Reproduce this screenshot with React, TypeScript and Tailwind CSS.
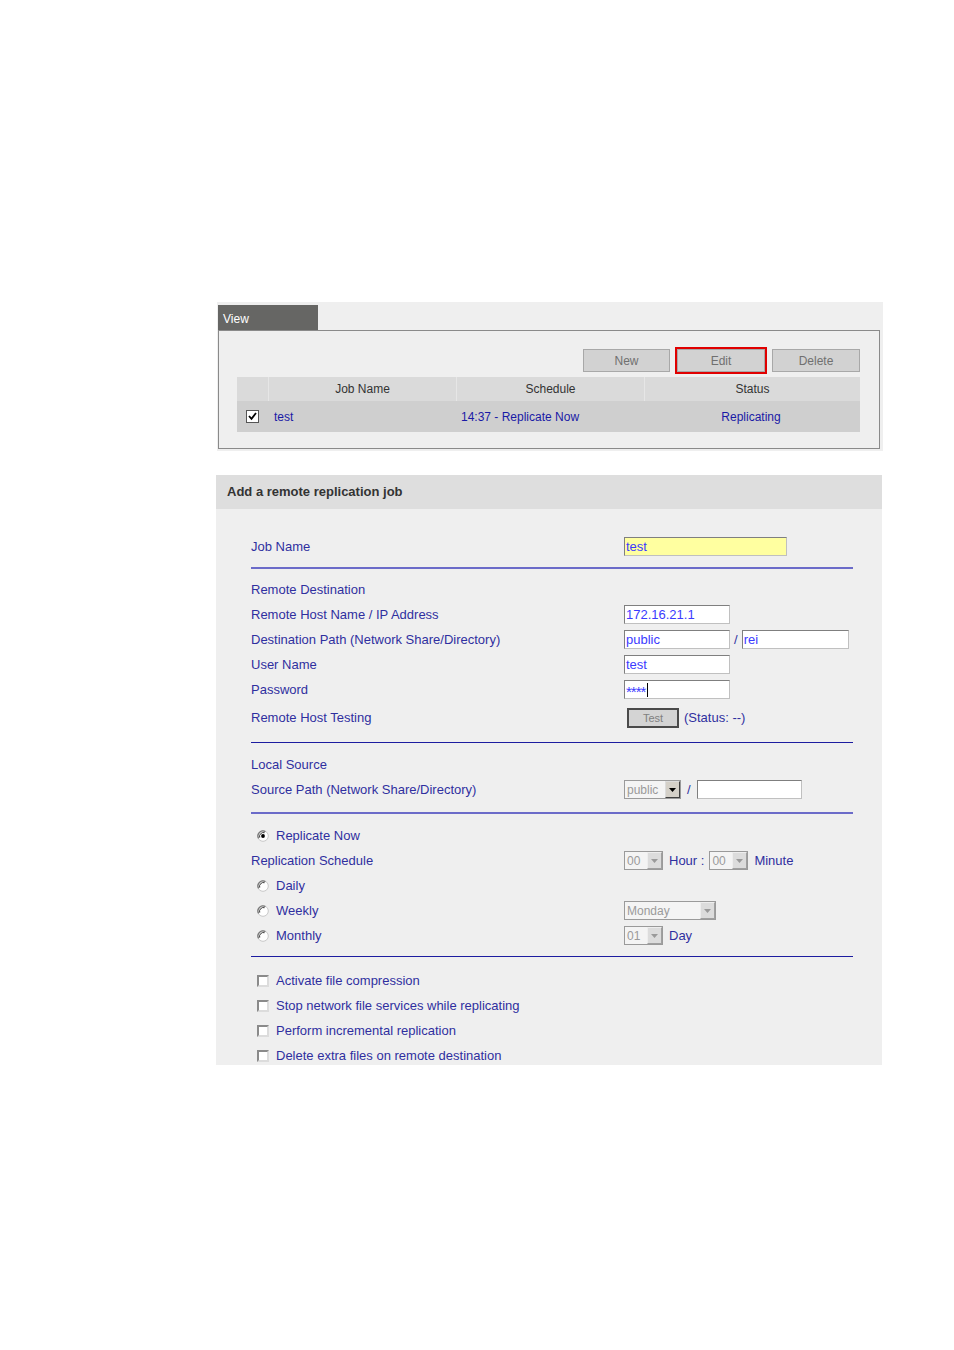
import React from "react";

const font = { fontFamily: '"Liberation Sans", Arial, sans-serif' };

function Radio({ checked = false }: { checked?: boolean }) {
  return (
    <svg width="12" height="12" viewBox="0 0 12 12" className="shrink-0">
      <circle cx="6" cy="6" r="5.3" fill="#ffffff" stroke="#c8c8c8" strokeWidth="1" />
      <path d="M1.6 8.4 A5 5 0 0 1 8.4 1.6" stroke="#7a7a7a" strokeWidth="1.3" fill="none" />
      <path d="M2.7 7.6 A3.9 3.9 0 0 1 7.6 2.7" stroke="#3a3a3a" strokeWidth="1" fill="none" />
      {checked && <circle cx="6" cy="6" r="1.9" fill="#000000" />}
    </svg>
  );
}

function Check() {
  return (
    <span className="block h-[12px] w-[12px] shrink-0 border-2 border-t-[#8a8a8a] border-l-[#8a8a8a] border-r-[#dcdcdc] border-b-[#dcdcdc] bg-white" />
  );
}

function TextBox({ value, w, yellow }: { value: string; w: string; yellow?: boolean }) {
  return (
    <div
      className={`flex h-[19px] items-center border border-[#7f7f7f] border-r-[#c0c0c0] border-b-[#c0c0c0] px-[1px] text-[13px] text-[#3b3bff] ${w} ${
        yellow ? "bg-[#ffffa0]" : "bg-white"
      }`}
    >
      {value}
    </div>
  );
}

function Select({ value, w, enabled }: { value: string; w: string; enabled?: boolean }) {
  return (
    <div className={`flex h-[19px] items-stretch border border-[#9a9a9a] bg-[#f4f4f4] ${w}`}>
      <span className="flex flex-1 items-center pl-[2px] text-[12px] text-[#9a9a9a]">{value}</span>
      <span
        className={`flex w-[15px] items-center justify-center border ${
          enabled
            ? "border-[#404040] border-t-[#dcdcdc] border-l-[#dcdcdc] bg-[#d4d0c8]"
            : "border-[#a0a0a0] border-t-[#eeeeee] border-l-[#eeeeee] bg-[#dcdcdc]"
        }`}
      >
        <svg width="7" height="4" viewBox="0 0 7 4">
          <path d="M0 0 H7 L3.5 4 Z" fill={enabled ? "#000" : "#9a9a9a"} />
        </svg>
      </span>
    </div>
  );
}

function Row({ children, className = "" }: { children: React.ReactNode; className?: string }) {
  return <div className={`flex h-[25px] items-center ${className}`}>{children}</div>;
}

function Label({ children }: { children: React.ReactNode }) {
  return <span className="w-[373px] shrink-0 text-[13px] text-[#2f2f9f]">{children}</span>;
}

function RadioLabel({ checked, text, w }: { checked?: boolean; text: string; w?: string }) {
  return (
    <>
      <span className="ml-[6px] mr-[7px] flex">
        <Radio checked={checked} />
      </span>
      <span className={`text-[13px] text-[#2f2f9f] ${w ?? ""}`}>{text}</span>
    </>
  );
}

export default function App() {
  return (
    <div className="min-h-[1350px] w-[954px] bg-white pt-[302px]" style={font}>
      {/* View panel */}
      <div className="ml-[217px] w-[666px] bg-[#efefef] pb-[2px] pl-[1px] pr-[3px] pt-[3px]">
        <div className="flex h-[25px] w-[100px] items-center bg-[#666664] pl-[5px] pt-[2px] text-[12px] text-white">
          View
        </div>
        <div className="h-[119px] border border-[#8a8a8a] pl-[18px] pr-[19px] pt-[18px]">
          <div className="flex justify-end gap-[7px]">
            <button className="h-[23px] w-[87px] border border-[#a8a8a8] bg-[#d2d2d2] text-[12px] text-[#707070]">
              New
            </button>
            <button className="h-[23px] w-[88px] border border-[#a8a8a8] bg-[#d2d2d2] text-[12px] text-[#707070] outline-2 outline-offset-[0px] outline-[#e00000]">
              Edit
            </button>
            <button className="h-[23px] w-[88px] border border-[#a8a8a8] bg-[#d2d2d2] text-[12px] text-[#707070]">
              Delete
            </button>
          </div>
          <div className="mt-[5px] text-[12px]">
            <div className="grid h-[24px] grid-cols-[31px_187px_187px_1fr] gap-x-[1px] bg-[#e6e6e6] text-[#333]">
              <div className="bg-[#dadada]" />
              <div className="flex items-center justify-center bg-[#dadada]">Job Name</div>
              <div className="flex items-center justify-center bg-[#dadada]">Schedule</div>
              <div className="flex items-center justify-center bg-[#dadada]">Status</div>
            </div>
            <div className="grid h-[31px] grid-cols-[31px_187px_187px_1fr] items-center bg-[#cfcfcf] text-[#1a1aa6]">
              <div className="flex justify-center">
                <span className="flex h-[13px] w-[13px] items-center justify-center border border-[#555] bg-white">
                  <svg width="9" height="9" viewBox="0 0 9 9">
                    <path d="M1 4 L3.5 6.8 L8 1" stroke="#000" strokeWidth="1.8" fill="none" />
                  </svg>
                </span>
              </div>
              <div className="pl-[6px]">test</div>
              <div className="pl-[6px]">14:37 - Replicate Now</div>
              <div className="text-center">Replicating</div>
            </div>
          </div>
        </div>
      </div>

      {/* Add job panel */}
      <div className="ml-[216px] mt-[24px] h-[590px] w-[666px] overflow-hidden bg-[#efefef]">
        <div className="flex h-[34px] items-center bg-[#dedede] pl-[11px] text-[13px] font-bold text-[#333]">
          Add a remote replication job
        </div>
        <div className="pl-[35px] pr-[29px] pt-[25px]">
          <Row>
            <Label>Job Name</Label>
            <TextBox value="test" w="w-[163px]" yellow />
          </Row>
          <div className="mt-[8px] h-[2px] bg-[#6b6bc9]" />

          <Row className="mt-[8px]">
            <Label>Remote Destination</Label>
          </Row>
          <Row>
            <Label>Remote Host Name / IP Address</Label>
            <TextBox value="172.16.21.1" w="w-[106px]" />
          </Row>
          <Row>
            <Label>Destination Path (Network Share/Directory)</Label>
            <TextBox value="public" w="w-[106px]" />
            <span className="mx-[4px] text-[13px] text-[#2f2f9f]">/</span>
            <TextBox value="rei" w="w-[107px]" />
          </Row>
          <Row>
            <Label>User Name</Label>
            <TextBox value="test" w="w-[106px]" />
          </Row>
          <Row>
            <Label>Password</Label>
            <div className="flex h-[19px] w-[106px] items-center border border-[#7f7f7f] border-r-[#c0c0c0] border-b-[#c0c0c0] bg-white px-[1px] text-[15px] leading-none text-[#3b3bff]">
              <span className="pt-[4px] tracking-[-1px]">****</span>
              <span className="ml-[2px] h-[14px] w-[1px] bg-black" />
            </div>
          </Row>
          <Row className="mt-[3px]">
            <Label>Remote Host Testing</Label>
            <button className="ml-[3px] h-[20px] w-[52px] border-2 border-[#4a4a4a] bg-[#d4d4d4] text-[11px] text-[#808080]">
              Test
            </button>
            <span className="ml-[5px] text-[13px] text-[#2f2f9f]">(Status: --)</span>
          </Row>
          <div className="mt-[12px] h-[1px] bg-[#1c1ca0]" />

          <Row className="mt-[9px]">
            <Label>Local Source</Label>
          </Row>
          <Row>
            <Label>Source Path (Network Share/Directory)</Label>
            <Select value="public" w="w-[57px]" enabled />
            <span className="mx-[6px] text-[13px] text-[#2f2f9f]">/</span>
            <TextBox value="" w="w-[105px]" />
          </Row>
          <div className="mt-[10px] h-[2px] bg-[#6b6bc9]" />

          <Row className="mt-[9px]">
            <RadioLabel checked text="Replicate Now" />
          </Row>
          <Row>
            <Label>Replication Schedule</Label>
            <Select value="00" w="w-[39px]" />
            <span className="ml-[6px] text-[13px] text-[#2f2f9f]">Hour :</span>
            <span className="ml-[5px]">
              <Select value="00" w="w-[39px]" />
            </span>
            <span className="ml-[6px] text-[13px] text-[#2f2f9f]">Minute</span>
          </Row>
          <Row>
            <RadioLabel text="Daily" />
          </Row>
          <Row>
            <RadioLabel text="Weekly" w="w-[348px]" />
            <Select value="Monday" w="w-[92px]" />
          </Row>
          <Row>
            <RadioLabel text="Monthly" w="w-[348px]" />
            <Select value="01" w="w-[39px]" />
            <span className="ml-[6px] text-[13px] text-[#2f2f9f]">Day</span>
          </Row>
          <div className="mt-[8px] h-[1px] bg-[#1c1ca0]" />

          <div className="mt-[11px]">
            {[
              "Activate file compression",
              "Stop network file services while replicating",
              "Perform incremental replication",
              "Delete extra files on remote destination",
            ].map((t) => (
              <Row key={t}>
                <span className="ml-[6px] mr-[7px] flex">
                  <Check />
                </span>
                <span className="text-[13px] text-[#2f2f9f]">{t}</span>
              </Row>
            ))}
          </div>
        </div>
      </div>
    </div>
  );
}
